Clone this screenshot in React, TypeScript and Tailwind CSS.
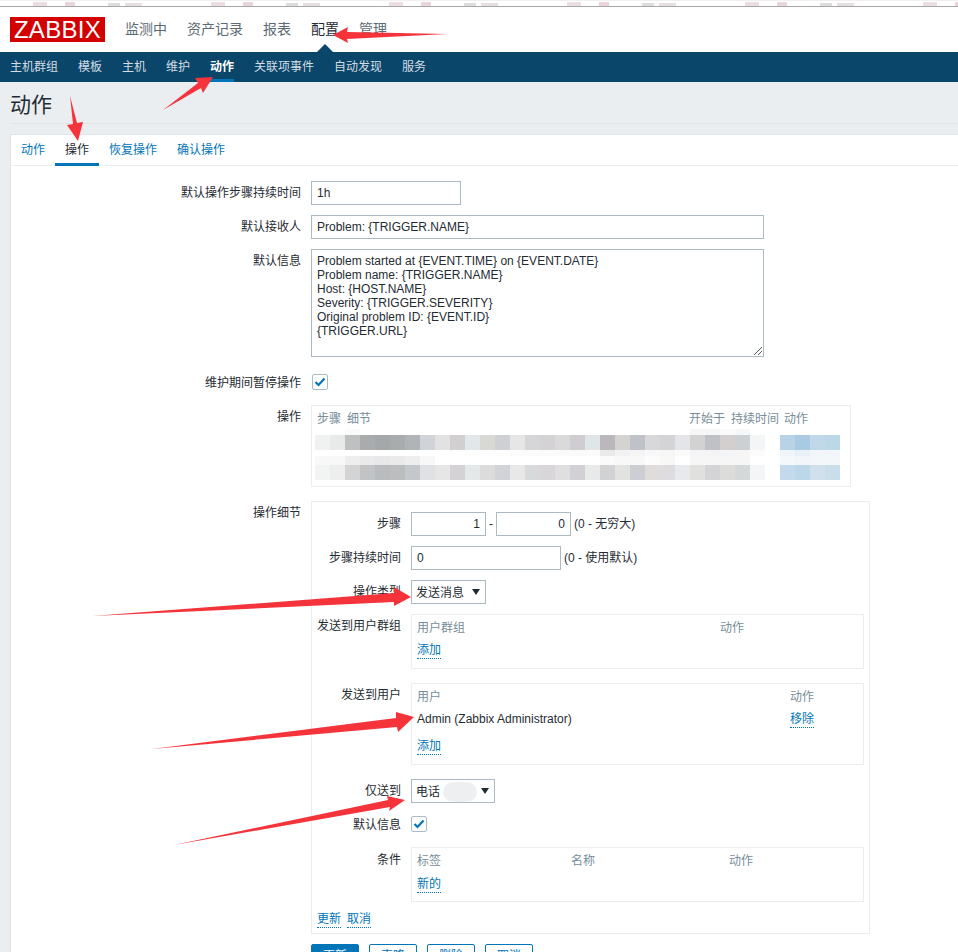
const font = { fontFamily: '"Liberation Sans", "Noto Sans CJK SC", sans-serif' };

const row1 = ["f0f1f1","e8e9e9","bfc1c0","aaabad","a5a8aa","a9acad","b0b4b7","d0d4d8","e2e2e2","d2cfd1","e2e8e9","d8d8d5","cfd0d4","e6e6e6","d6d6d8","d4d2d4","dadada","cfcdd2","e0e5e6","bab8bc","d4d3d2","bfc2c8","d8d8da","d4d4d6","e4e5e8","d2d2d2","bfc1c6","d2cfce","ccd0d2","f4f5f6","ffffff","b8d2e6","a8cae2","c0d8e8","bcd8e8"];
const row2 = ["f2f3f3","eeeeee","d4d4d4","c2c3c5","b8bcbf","bcbdbf","c4c8cc","e0e1e4","e6e6e6","d4d2d5","e4e8e9","dcdcdc","d2d3d8","e8e8e8","d8d9db","d8d6d9","dfdfdf","d2d0d5","e8e9e9","d2d2d4","e2e2e0","cdced3","e0dcdc","dedcde","e8e9ec","e0e0de","d4d4d6","dcdcda","d4d8d8","f4f5f6","ffffff","c4daec","bcd6ea","d0e0ec","c8deea"];
const rowMid = ["ffffff","ffffff","ffffff","ffffff","ffffff","ffffff","ffffff","ffffff","ffffff","ffffff","fdfdfd","fdfdfd","fdfdfd","fbfbfb","fbfbfb","fbfbfb","fafafa","fafafa","fafafa","eaeaea","f2f2f2","f4f4f4","f8f8fa","f6f6f4","fafafa","f4f4f6","f4f4f6","f4f4f6","f6f6f6","fbfbfc","ffffff","f0f5fa","e8f0f8","f2f6fa","f2f6fa"];
const rowFaint = ["f8f8f8","f8f8f8","eeeeee","eaeaea","e8e8ea","eaeaea","eeeeee","f8f8f8","ffffff","ffffff","ffffff","ffffff","ffffff","ffffff","ffffff","ffffff","ffffff","ffffff","ffffff","fafafa","f8f8f8","f8f8f8","fcfcfc","f8f8f6","ffffff","f6f6f6","f6f6f6","f6f6f6","f6f6f6","ffffff","ffffff","f4f8fb","f2f6fa","f4f7fa","f4f7fa"];
const rowTop = ["ffffff","ffffff","fafafa","ffffff","ffffff","ffffff","ffffff","ffffff","ffffff","ffffff","ffffff","ffffff","ffffff","ffffff","ffffff","ffffff","ffffff","ffffff","ffffff","ffffff","ffffff","ffffff","ffffff","ffffff","ffffff","f6f6f7","f6f6f7","fafafb","f6f7f8","ffffff","ffffff","ffffff","ffffff","ffffff","ffffff"];

function Mosaic({ cells, h }: { cells: string[]; h: string }) {
  return (
    <div className={`flex ${h}`}>
      {cells.map((c, i) => (
        <div key={i} className="w-[15px] shrink-0" style={{ backgroundColor: `#${c}` }} />
      ))}
    </div>
  );
}

function Check() {
  return (
    <div className="w-4 h-4 border border-[#acbbc2] rounded-[2px] bg-white flex items-center justify-center">
      <svg width="12" height="12" viewBox="0 0 12 12">
        <path d="M1.5 6l3 3 6-6.5" fill="none" stroke="#0275b8" strokeWidth="2.2" />
      </svg>
    </div>
  );
}

function Row({ label, className, pt, children }: { label: string; className?: string; pt: string; children: React.ReactNode }) {
  return (
    <div className={`flex ${className ?? ""}`}>
      <div className={`w-[300px] text-right pr-[10px] text-[12px] leading-[18px] text-[#1f2c33] shrink-0 ${pt}`}>{label}</div>
      <div className="flex-1">{children}</div>
    </div>
  );
}

function SubRow({ label, className, pt, children }: { label: string; className?: string; pt: string; children: React.ReactNode }) {
  return (
    <div className={`flex ${className ?? ""}`}>
      <div className={`w-[89px] text-right text-[12px] leading-[18px] text-[#1f2c33] shrink-0 ${pt}`}>{label}</div>
      <div className="ml-[10px] flex-1">{children}</div>
    </div>
  );
}

function Input({ w, v, right }: { w: string; v: string; right?: boolean }) {
  return (
    <div className={`${w} h-[24px] border border-[#acbbc2] bg-white px-[5px] text-[12px] leading-[22px] text-[#1f2c33] ${right ? "text-right" : ""}`}>{v}</div>
  );
}

function Link({ children }: { children: React.ReactNode }) {
  return <span className="text-[#0275b8] border-b border-dotted border-[#0275b8] leading-[15px] inline-block">{children}</span>;
}

function Btn({ children, primary }: { children: React.ReactNode; primary?: boolean }) {
  return (
    <div className={`w-[48px] h-[24px] rounded-[2px] border border-[#0275b8] text-center text-[12px] leading-[22px] ${primary ? "bg-[#0275b8] text-white" : "bg-white text-[#0275b8]"}`}>{children}</div>
  );
}

function Arrows() {
  return (
    <svg className="absolute left-0 top-0 pointer-events-none" width="958" height="952" viewBox="0 0 958 952">
      <g fill="#f5333a">
        <polygon points="333,35 348,27 347,32 447,34 347,39 348,43" />
        <polygon points="213,77 195,78 198,83 163,110 201,88 203,93" />
        <polygon points="78,141 67,125 73,124 70,96 77,123 83,122" />
        <polygon points="411,597 394,587 394,593 92,616 394,602 394,606" />
        <polygon points="414,717 396,712 396,718 152,749 397,727 398,732" />
        <polygon points="405,800 387,796 388,800 174,845 390,807 389,811" />
      </g>
    </svg>
  );
}

function StripGroup() {
  return (
    <div className="w-[178px] shrink-0 flex items-end h-[5px]">
      <div className="ml-[33px] w-[14px] h-[4px] bg-[#ecdde1]" />
      <div className="ml-[18px] w-[10px] h-[4px] bg-[#e8d6db]" />
      <div className="ml-[33px] w-[12px] h-[3px] bg-[#dcdcdc]" />
      <div className="ml-[5px] w-[17px] h-[3px] bg-[#e6dfe0]" />
    </div>
  );
}

export default function App() {
  const groups = Array.from({ length: 6 });
  return (
    <div className="relative w-[958px] h-[952px] overflow-hidden bg-[#ebeef0]" style={font}>
      {/* top strip */}
      <div className="h-[7px] bg-white border-b border-[#a8a6a6] overflow-hidden">
        <div className="h-[1px] bg-[#f0f0f0]" />
        <div className="flex">
          {groups.map((_, i) => (
            <StripGroup key={i} />
          ))}
        </div>
      </div>

      {/* header */}
      <div className="h-[45px] bg-white flex items-start relative">
        <div className="ml-[10px] mt-[10px] w-[95px] h-[25px] bg-[#d40000] text-white text-[24px] leading-[25px] text-center tracking-[0.3px]">ZABBIX</div>
        <div className="flex ml-[20px] mt-[12px] gap-[20px] text-[14px] leading-[20px] text-[#5c6a72]">
          <span>监测中</span>
          <span>资产记录</span>
          <span>报表</span>
          <span className="text-[#1f2c33]">配置</span>
          <span>管理</span>
        </div>
        <div className="absolute left-[317px] bottom-0 w-0 h-0 border-l-[8px] border-r-[8px] border-b-[8px] border-l-transparent border-r-transparent border-b-[#0a466a]" />
      </div>

      {/* nav */}
      <div className="h-[30px] bg-[#0a466a] flex pl-[10px] gap-[20px] text-[12px] leading-[30px] text-[#d3dde3]">
        <span>主机群组</span>
        <span>模板</span>
        <span>主机</span>
        <span>维护</span>
        <span className="text-white font-bold h-[30px] border-b-[3px] border-[#0275b8]">动作</span>
        <span>关联项事件</span>
        <span>自动发现</span>
        <span>服务</span>
      </div>

      {/* title */}
      <div className="ml-[10px] h-[42px] border-b border-[#dfe4e7] text-[21px] leading-[28px] pt-[9px] text-[#1f2c33]">
        动作
      </div>

      {/* panel */}
      <div className="ml-[10px] mt-[10px] bg-white border border-[#dfe4e7] border-r-0 h-[900px]">
        <div className="h-[31px] border-b border-[#ebeef0] flex text-[12px] leading-[30px] text-[#0275b8]">
          <span className="px-[10px]">动作</span>
          <span className="px-[10px] h-[31px] text-[#1f2c33] border-b-[3px] border-[#0275b8]">操作</span>
          <span className="px-[10px]">恢复操作</span>
          <span className="px-[10px]">确认操作</span>
        </div>

        <Row label="默认操作步骤持续时间" pt="pt-[3px]" className="mt-[15px]">
          <Input w="w-[150px]" v="1h" />
        </Row>
        <Row label="默认接收人" pt="pt-[3px]" className="mt-[10px]">
          <Input w="w-[453px]" v="Problem: {TRIGGER.NAME}" />
        </Row>
        <Row label="默认信息" pt="pt-[3px]" className="mt-[10px]">
          <div className="relative w-[453px] h-[108px] border border-[#acbbc2] px-[5px] pt-[4px] text-[12px] leading-[14px] text-[#1f2c33]">
            <div>Problem started at {"{EVENT.TIME}"} on {"{EVENT.DATE}"}</div>
            <div>Problem name: {"{TRIGGER.NAME}"}</div>
            <div>Host: {"{HOST.NAME}"}</div>
            <div>Severity: {"{TRIGGER.SEVERITY}"}</div>
            <div>Original problem ID: {"{EVENT.ID}"}</div>
            <div>{"{TRIGGER.URL}"}</div>
            <svg className="absolute right-0 bottom-0" width="10" height="10" viewBox="0 0 10 10">
              <path d="M1 9L9 1M5 9L9 5" stroke="#555" strokeWidth="1" />
            </svg>
          </div>
        </Row>
        <Row label="维护期间暂停操作" pt="pt-0" className="mt-[17px]">
          <div className="ml-[1px]"><Check /></div>
        </Row>
        <Row label="操作" pt="pt-[3px]" className="mt-[13px]">
          <div className="w-[540px] h-[82px] border border-[#ebeef0] pl-[5px] pt-[4px] text-[12px] leading-[18px] text-[#768d99]">
            <div className="flex relative">
              <span className="w-[30px]">步骤</span>
              <span>细节</span>
              <span className="absolute left-[372px]">开始于</span>
              <span className="absolute left-[414px]">持续时间</span>
              <span className="absolute left-[467px]">动作</span>
            </div>
            <div className="mt-[1px] ml-[-2px]">
              <Mosaic cells={rowTop} h="h-[6px]" />
              <Mosaic cells={row1} h="h-[15px]" />
              <Mosaic cells={rowMid} h="h-[6px]" />
              <Mosaic cells={rowFaint} h="h-[9px]" />
              <Mosaic cells={row2} h="h-[15px]" />
            </div>
          </div>
        </Row>

        <Row label="操作细节" pt="pt-[3px]" className="mt-[14px]">
          <div className="w-[559px] h-[433px] border border-[#ebeef0] pt-[10px]">
            <SubRow label="步骤" pt="pt-[3px]">
              <div className="flex items-center text-[12px] text-[#1f2c33]">
                <Input w="w-[75px]" v="1" right />
                <span className="w-[10px] text-center">-</span>
                <Input w="w-[75px]" v="0" right />
                <span className="ml-[3px]">(0 - 无穷大)</span>
              </div>
            </SubRow>
            <SubRow label="步骤持续时间" pt="pt-[3px]" className="mt-[10px]">
              <div className="flex items-center text-[12px] text-[#1f2c33]">
                <Input w="w-[150px]" v="0" />
                <span className="ml-[3px]">(0 - 使用默认)</span>
              </div>
            </SubRow>
            <SubRow label="操作类型" pt="pt-[3px]" className="mt-[10px]">
              <div className="w-[75px] h-[24px] border border-[#acbbc2] flex items-center justify-between pl-[4px] pr-[5px] text-[12px] text-[#1f2c33]">
                <span className="mt-[2px]">发送消息</span>
                <span className="w-0 h-0 border-l-[4px] border-r-[4px] border-t-[6px] border-l-transparent border-r-transparent border-t-[#1f2c33]" />
              </div>
            </SubRow>
            <SubRow label="发送到用户群组" pt="pt-[3px]" className="mt-[10px]">
              <div className="w-[453px] h-[55px] border border-[#ebeef0] px-[5px] pt-[4px] text-[12px] leading-[18px] relative">
                <div className="text-[#768d99]">用户群组</div>
                <div className="absolute left-[308px] top-[4px] text-[#768d99]">动作</div>
                <div className="mt-[4px]"><Link>添加</Link></div>
              </div>
            </SubRow>
            <SubRow label="发送到用户" pt="pt-[3px]" className="mt-[14px]">
              <div className="w-[453px] h-[82px] border border-[#ebeef0] px-[5px] pt-[4px] text-[12px] leading-[18px] relative">
                <div className="text-[#768d99]">用户</div>
                <div className="absolute left-[378px] top-[4px] text-[#768d99]">动作</div>
                <div className="mt-[4px] text-[#1f2c33]">Admin (Zabbix Administrator)</div>
                <div className="absolute left-[378px] top-[26px]"><Link>移除</Link></div>
                <div className="mt-[9px]"><Link>添加</Link></div>
              </div>
            </SubRow>
            <SubRow label="仅送到" pt="pt-[3px]" className="mt-[14px]">
              <div className="w-[84px] h-[24px] border border-[#acbbc2] flex items-center px-[4px] text-[12px] text-[#1f2c33]">
                <span className="mt-[2px]">电话</span>
                <span className="ml-[3px] mt-[2px] w-[34px] h-[20px] rounded-full bg-[#eeeff1]" />
                <span className="ml-[4px] w-0 h-0 border-l-[4px] border-r-[4px] border-t-[6px] border-l-transparent border-r-transparent border-t-[#1f2c33]" />
              </div>
            </SubRow>
            <SubRow label="默认信息" pt="pt-0" className="mt-[13px]">
              <Check />
            </SubRow>
            <SubRow label="条件" pt="pt-[4px]" className="mt-[13px]">
              <div className="w-[453px] h-[55px] border border-[#ebeef0] px-[5px] pt-[4px] text-[12px] leading-[18px] relative">
                <div className="text-[#768d99]">标签</div>
                <div className="absolute left-[159px] top-[4px] text-[#768d99]">名称</div>
                <div className="absolute left-[317px] top-[4px] text-[#768d99]">动作</div>
                <div className="mt-[5px]"><Link>新的</Link></div>
              </div>
            </SubRow>
            <div className="mt-[10px] ml-[5px] flex gap-[6px] text-[12px]">
              <Link>更新</Link>
              <Link>取消</Link>
            </div>
          </div>
        </Row>

        <div className="mt-[10px] ml-[300px] flex gap-[10px]">
          <Btn primary>更新</Btn>
          <Btn>克隆</Btn>
          <Btn>删除</Btn>
          <Btn>取消</Btn>
        </div>
      </div>

      <Arrows />
    </div>
  );
}
